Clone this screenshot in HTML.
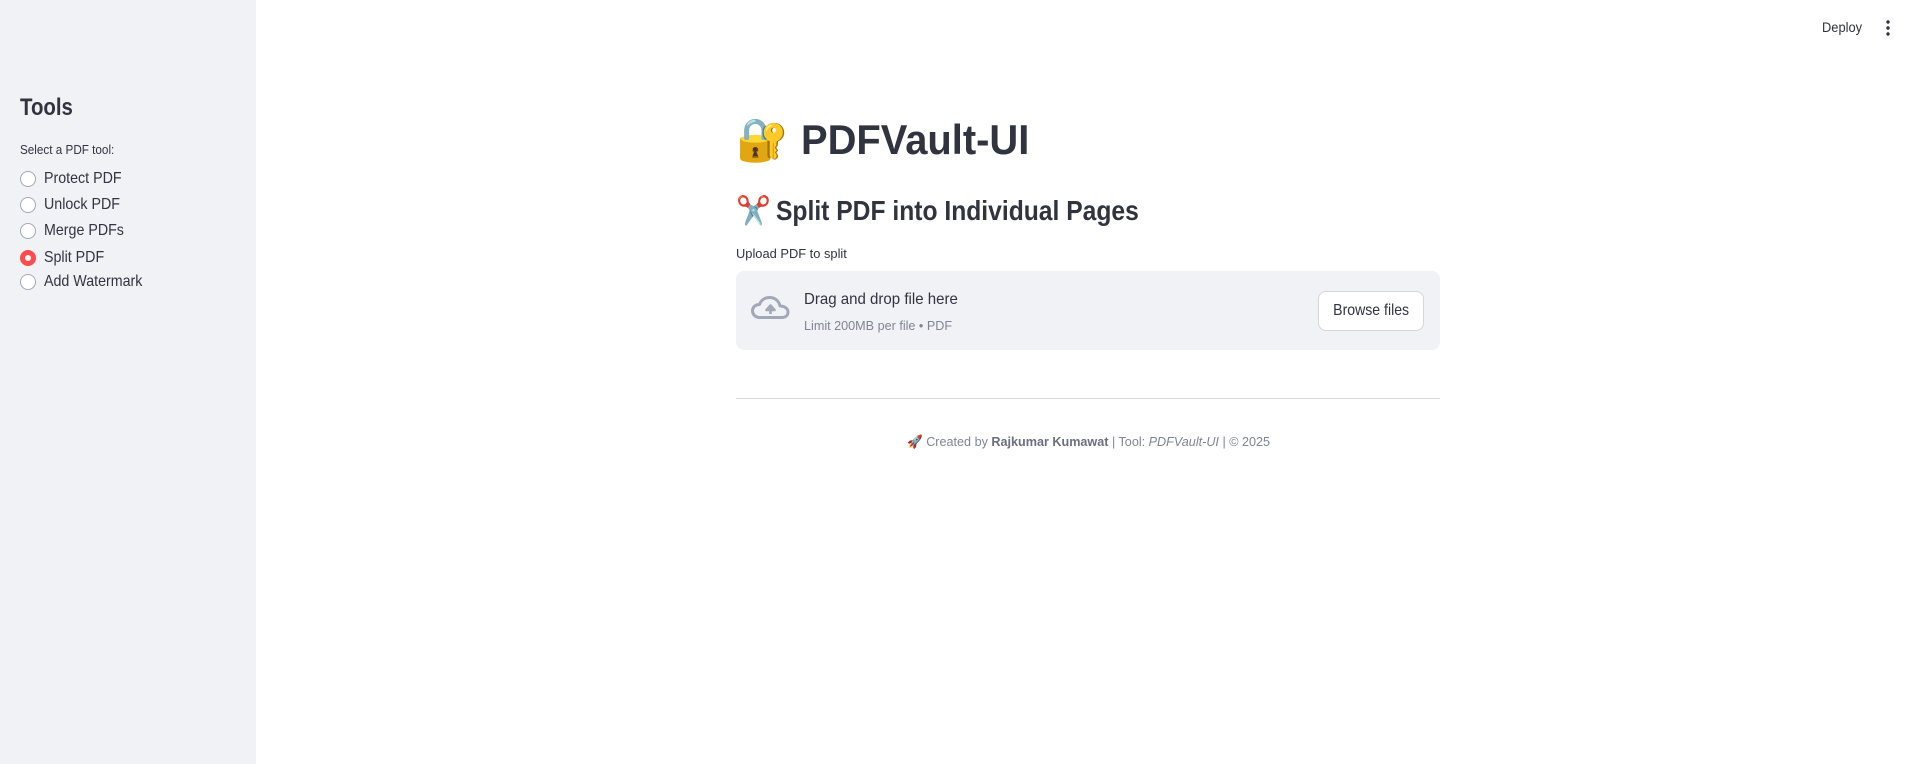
<!DOCTYPE html>
<html><head><meta charset="utf-8"><style>
*{margin:0;padding:0;box-sizing:border-box}
body{width:1917px;height:764px;overflow:hidden;background:#fff;font-family:"Liberation Sans","Noto Sans CJK SC",sans-serif;color:#31333f;position:relative}
.sb{position:absolute;left:0;top:0;width:256px;height:764px;background:#f0f2f6}
.abs{position:absolute;white-space:nowrap}
.narrow{display:inline-block;transform-origin:left center}
.radio{position:absolute;left:20px;width:16px;height:16px;border-radius:50%;border:1px solid #a3a8b8;background:#fff}
.radio.on{background:#ff4b4b;border-color:#ff4b4b}
.radio.on::after{content:"";position:absolute;left:4px;top:4px;width:6px;height:6px;border-radius:50%;background:#fff}
.rl{position:absolute;left:44px;font-size:16px;line-height:20px}
</style></head><body>
<div class="sb">
<div class="abs" style="left:20px;top:94px;font-size:24px;font-weight:bold;line-height:28px"><span class="narrow" style="transform:scaleX(0.85)">Tools</span></div>
<div class="abs" style="left:20px;top:142px;font-size:13px;line-height:16px"><span class="narrow" style="transform:scaleX(0.9)">Select a PDF tool:</span></div>
<div class="radio" style="top:171px"></div><div class="rl" style="top:169px"><span class="narrow" style="transform:scaleX(0.89)">Protect PDF</span></div>
<div class="radio" style="top:197px"></div><div class="rl" style="top:195px"><span class="narrow" style="transform:scaleX(0.89)">Unlock PDF</span></div>
<div class="radio" style="top:223px"></div><div class="rl" style="top:221px"><span class="narrow" style="transform:scaleX(0.89)">Merge PDFs</span></div>
<div class="radio on" style="top:250px"></div><div class="rl" style="top:248px"><span class="narrow" style="transform:scaleX(0.89)">Split PDF</span></div>
<div class="radio" style="top:274px"></div><div class="rl" style="top:272px"><span class="narrow" style="transform:scaleX(0.89)">Add Watermark</span></div>
</div>

<div class="abs" style="left:1822px;top:18px;font-size:14px;line-height:18px"><span class="narrow" style="transform:scaleX(0.92)">Deploy</span></div>
<svg class="abs" style="left:1884px;top:20px" width="8" height="16"><circle cx="4" cy="2" r="1.7" fill="#31333f"/><circle cx="4" cy="8" r="1.7" fill="#31333f"/><circle cx="4" cy="14" r="1.7" fill="#31333f"/></svg>

<div class="abs" style="left:736px;top:115px;font-size:42px;line-height:50px">🔐</div>
<div class="abs" style="left:801px;top:115px;font-size:42px;font-weight:bold;line-height:50px"><span class="narrow" style="transform:scaleX(0.95)">PDFVault-UI</span></div>

<div class="abs" style="left:736px;top:194px;font-size:28px;line-height:34px">✂️</div>
<div class="abs" style="left:776px;top:194px;font-size:28px;font-weight:bold;line-height:34px"><span class="narrow" style="transform:scaleX(0.88)">Split PDF into Individual Pages</span></div>

<div class="abs" style="left:736px;top:246px;font-size:13px;line-height:16px"><span class="narrow" style="transform:scaleX(0.99)">Upload PDF to split</span></div>

<div class="abs" style="left:736px;top:271px;width:704px;height:79px;background:#f0f2f6;border-radius:8px"></div>
<svg class="abs" style="left:751px;top:296px" width="39" height="24" viewBox="0 0 39 24"><path d="M9 21.5 C3.5 21.5 1.5 17.5 1.5 15 C1.5 11 4.5 8.5 8.5 8.5 C10 4 14 1.5 18.5 1.5 C24 1.5 28 5 29 10 C33.5 10 37 12.5 37 16 C37 19.5 34.5 21.5 31 21.5 Z" fill="none" stroke="#a3a8b8" stroke-width="3" stroke-linejoin="round"/><path d="M19.5 18 V11 M15.5 14 L19.5 9.5 L23.5 14 Z" stroke="#a3a8b8" stroke-width="2.6" fill="#a3a8b8" stroke-linejoin="round"/></svg>
<div class="abs" style="left:804px;top:290px;font-size:16px;line-height:20px"><span class="narrow" style="transform:scaleX(0.94)">Drag and drop file here</span></div>
<div class="abs" style="left:804px;top:318px;font-size:13px;line-height:16px;color:#808495"><span class="narrow" style="transform:scaleX(0.97)">Limit 200MB per file • PDF</span></div>
<div class="abs" style="left:1318px;top:291px;width:106px;height:40px;background:#fff;border:1px solid #d6d6d9;border-radius:8px;font-size:16px;line-height:38px;text-align:center"><span class="narrow" style="transform:scaleX(0.88);transform-origin:center">Browse files</span></div>

<div class="abs" style="left:736px;top:398px;width:704px;height:1px;background:#d9d9dc"></div>

<div class="abs" style="left:907px;top:434px;font-size:13px;line-height:16px;color:#808495"><span class="narrow" style="transform:scaleX(0.97)">🚀 Created by <b style="color:#6c6f7d">Rajkumar Kumawat</b> | Tool: <i>PDFVault-UI</i> | © 2025</span></div>
</body></html>
